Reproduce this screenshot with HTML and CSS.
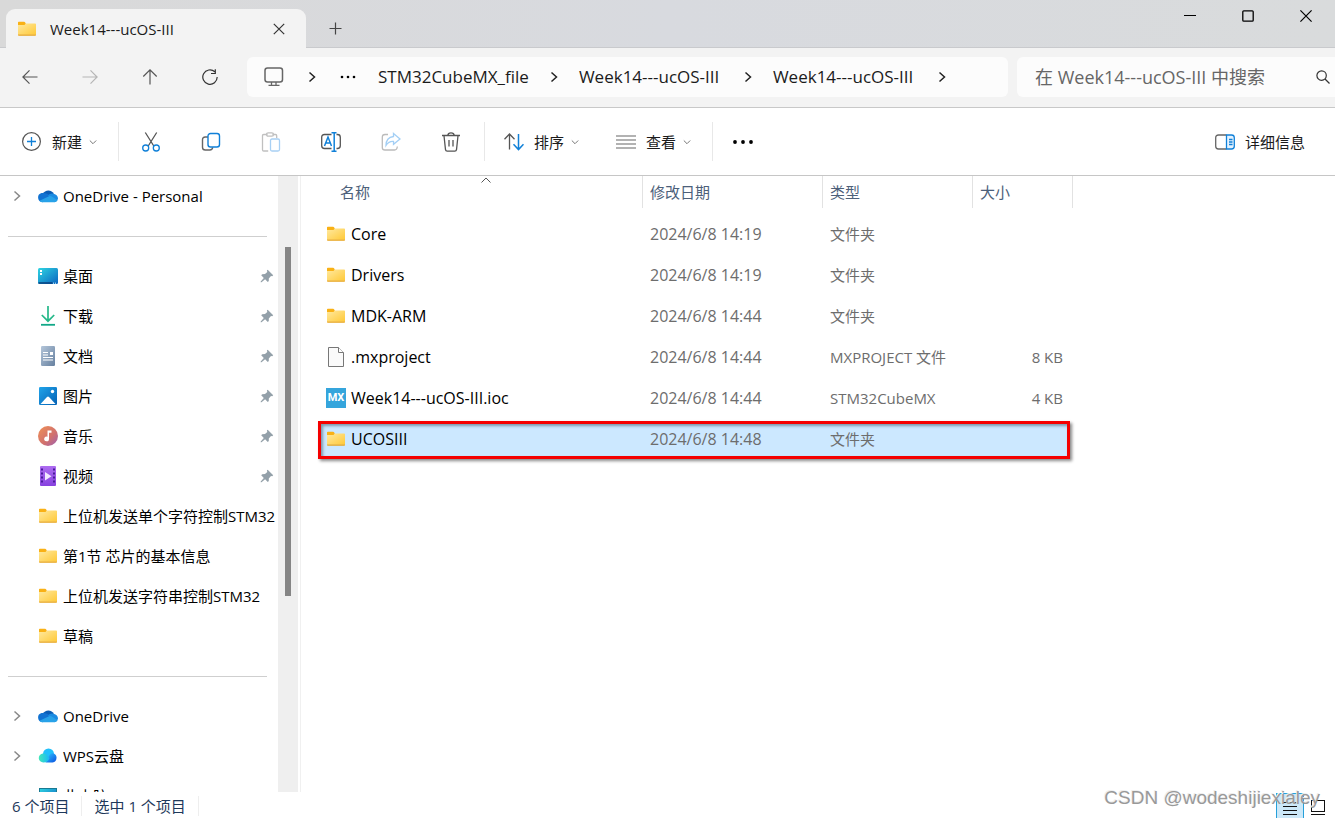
FILE: index.html
```html
<!DOCTYPE html>
<html lang="zh-CN">
<head>
<meta charset="utf-8">
<meta name="viewport" content="width=device-width, initial-scale=1">
<title>Week14---ucOS-III</title>
<link rel="stylesheet" href="styles.css">
</head>
<body>
<svg class="defs" aria-hidden="true">
  <defs>
    <linearGradient id="gFolder" x1="0" y1="0" x2="1" y2="1"><stop offset="0" stop-color="#ffe9a0"/><stop offset="1" stop-color="#ffc937"/></linearGradient>
    <linearGradient id="gDesk" x1="0" y1="0" x2="1" y2="1"><stop offset="0" stop-color="#2fd5e2"/><stop offset="1" stop-color="#0b64c0"/></linearGradient>
    <linearGradient id="gDoc" x1="0" y1="0" x2="1" y2="1"><stop offset="0" stop-color="#b4c6da"/><stop offset="1" stop-color="#66809f"/></linearGradient>
    <linearGradient id="gPic" x1="0" y1="0" x2="1" y2="1"><stop offset="0" stop-color="#20a4ea"/><stop offset="1" stop-color="#0561b4"/></linearGradient>
    <linearGradient id="gMusic" x1="0" y1="0" x2="1" y2="1"><stop offset="0" stop-color="#f09155"/><stop offset=".6" stop-color="#d0706f"/><stop offset="1" stop-color="#9c60b4"/></linearGradient>
    <linearGradient id="gVideo" x1="0" y1="0" x2="0" y2="1"><stop offset="0" stop-color="#ad6cf0"/><stop offset="1" stop-color="#8742df"/></linearGradient>
    <linearGradient id="gWps" x1="0" y1="0" x2="1" y2="1"><stop offset="0" stop-color="#30c8ff"/><stop offset="1" stop-color="#0a4fe0"/></linearGradient>
    <linearGradient id="gWps2" x1="0" y1="0" x2="1" y2="0"><stop offset="0" stop-color="#42e8b8"/><stop offset="1" stop-color="#18b8f8"/></linearGradient>
    <symbol id="folder" viewBox="0 0 20 20"><path d="M1 3.500q0-.8.8-.8h5.400q.5 0 .8.5l.8 1.200V7H1z" fill="#f9b115"/><path d="M1 6h6.500l1.300-1.600h9.400q.8 0 .8.8v10.600H1z" fill="url(#gFolder)"/><path d="M1 15.600h18v.3q0 .8-.8.8H1.800q-.8 0-.8-.8z" fill="#e8a41c"/></symbol>
    <symbol id="cloud" viewBox="0 0 20 20"><path d="M4 9.500A6.600 6.600 0 0 1 15 6.500L18 12H4z" fill="#0b5cb4"/><path d="M4.500 16.300A4.700 4.700 0 0 1 3.500 7.100q3.300-.6 6 1l6.500 4z" fill="#1172d2"/><path d="M10 9.300q2.500-2.500 5.500-1.600Q20 8.800 20 12.700q-.5 3-3.500 3.600z" fill="#1b8be2"/><path d="M1.500 14.800l9.500-4.500q1.400-.5 2.800.3l5.700 3.700q-1 1.900-3.300 2H4.700q-2 0-3.200-1.500z" fill="#28a2e8"/></symbol>
    <symbol id="wps" viewBox="0 0 20 20"><circle cx="10.500" cy="8" r="5.500" fill="#20c0fb"/><path d="M14.500 7.200a4.700 4.700 0 0 1 0 9.300H7.500L11.500 9q1.200-1.800 3-1.800z" fill="url(#gWps)"/><path d="M5 7.500q2.500-.2 4 1.500l2.500 3.200q-2 4.300-6 4.300A4.500 4.500 0 0 1 5 7.500z" fill="url(#gWps2)"/></symbol>
    <symbol id="pin" viewBox="0 0 14 14"><path d="M7.700.8 13.200 6.300 12.200 7.300 11 7.100 8.800 9.500V12L7.800 13 5.100 10.200 1.500 13.300.7 13.300.7 12.500 3.800 8.900 1.200 6.300 2.200 5.300 5 5 7.300 3 6.900 1.600z" fill="#93a0a9"/></symbol>
    <symbol id="chev" viewBox="0 0 10 12"><path d="M2.500 1.500 7.500 6l-5 4.500" fill="none" stroke="currentColor" stroke-width="1.500"/></symbol>
    <symbol id="down" viewBox="0 0 8 8"><path d="M.8 2.500 4 5.700 7.200 2.500" fill="none" stroke="#777" stroke-width="1"/></symbol>
  </defs>
</svg>

<header class="titlebar">
  <div class="tab">
    <svg class="ico"><use href="#folder"/></svg>
    <span class="tab-title">Week14---ucOS-III</span>
    <button class="plain tab-close" aria-label="关闭标签页"><svg width="12" height="12"><path d="M.8.800l10.400 10.400M11.200.8.8 11.200" stroke="#333" stroke-width="1.200"/></svg></button>
  </div>
  <button class="plain tab-add" aria-label="新标签页"><svg width="13" height="13"><path d="M6.500.5v12M.5 6.500h12" stroke="#444" stroke-width="1.200"/></svg></button>
  <div class="window-buttons">
    <button class="plain" aria-label="最小化"><svg width="12" height="12"><path d="M0 5.500h12" stroke="#000"/></svg></button>
    <button class="plain" aria-label="最大化"><svg width="12" height="12"><rect x=".8" y=".8" width="10.400" height="10.400" rx="1" fill="none" stroke="#000" stroke-width="1.300"/></svg></button>
    <button class="plain" aria-label="关闭"><svg width="12" height="12"><path d="M.4.400l11.200 11.200M11.600.4.4 11.600" stroke="#000" stroke-width="1.200"/></svg></button>
  </div>
</header>

<div class="navrow">
  <div class="nav-buttons">
    <button class="plain" aria-label="后退"><svg width="16" height="16"><path d="M15.500 8H1M7.500 1.300.9 8l6.600 6.700" fill="none" stroke="#555" stroke-width="1.200"/></svg></button>
    <button class="plain" aria-label="前进" disabled><svg width="16" height="16"><path d="M.5 8H15M8.500 1.300 15.100 8l-6.600 6.700" fill="none" stroke="#b5b5b5" stroke-width="1.200"/></svg></button>
    <button class="plain" aria-label="上移"><svg width="16" height="16"><path d="M8 15.500V1M1.300 7.500 8 .9l6.700 6.600" fill="none" stroke="#555" stroke-width="1.200"/></svg></button>
    <button class="plain" aria-label="刷新"><svg width="16" height="16"><path d="M15.200 8A7.200 7.200 0 1 1 12.800 2.700M13.300.3v4.200H9" fill="none" stroke="#333" stroke-width="1.200"/></svg></button>
  </div>
  <nav class="address" aria-label="地址栏">
    <svg class="monitor" viewBox="0 0 20 20"><rect x="1" y="1" width="17.500" height="14" rx="2.500" fill="none" stroke="#666" stroke-width="1.500"/><path d="M7.500 15v3M12 15v3M4.500 18.300h11" stroke="#666" stroke-width="1.300"/></svg>
    <svg class="sep first"><use href="#chev"/></svg>
    <button class="plain more" aria-label="更多路径"><svg width="16" height="4"><circle cx="2" cy="2" r="1.300"/><circle cx="8" cy="2" r="1.300"/><circle cx="14" cy="2" r="1.300"/></svg></button>
    <a href="#">STM32CubeMX_file</a><svg class="sep"><use href="#chev"/></svg>
    <a href="#">Week14---ucOS-III</a><svg class="sep"><use href="#chev"/></svg>
    <a href="#">Week14---ucOS-III</a><svg class="sep"><use href="#chev"/></svg>
  </nav>
  <label class="search">
    <input type="text" aria-label="搜索" placeholder="在 Week14---ucOS-III 中搜索">
    <svg width="14" height="14"><circle cx="5.600" cy="5.600" r="4.700" fill="none" stroke="#333" stroke-width="1.200"/><path d="m9 9 4.500 4.500" stroke="#333" stroke-width="1.200"/></svg>
  </label>
</div>

<div class="toolbar" role="toolbar" aria-label="命令">
  <button class="plain cmd new"><svg class="ico" fill="none"><circle cx="9.500" cy="9.500" r="8.900" stroke="#555" stroke-width="1.200"/><path d="M9.500 5v9M5 9.500h9" stroke="#1080d8" stroke-width="1.300"/></svg><span>新建</span><svg class="down"><use href="#down"/></svg></button>
  <i class="rule"></i>
  <div class="icons">
    <button class="plain" aria-label="剪切"><svg class="ico" fill="none" stroke-width="1.300"><path d="M4.300.500 12.800 14M15.700.500 7.200 14" stroke="#555"/><circle cx="4.700" cy="16" r="3" stroke="#1080d8"/><circle cx="15.300" cy="16" r="3" stroke="#1080d8"/></svg></button>
    <button class="plain" aria-label="复制"><svg class="ico" fill="none" stroke-width="1.400"><path d="M7 5H4.200Q1.500 5 1.500 7.800v7.400Q1.500 18 4.300 18h4.500q2.700 0 2.900-2.700" stroke="#666"/><rect x="7" y="1.500" width="11.500" height="13.500" rx="2.500" stroke="#1080d8"/></svg></button>
    <button class="plain" aria-label="粘贴" disabled><svg class="ico" fill="none" stroke-width="1.300"><path d="M6.500 2.500H2.700q-1.200 0-1.200 1.200v14q0 1.300 1.200 1.300h4.500M11.500 2.500h3q1.200 0 1.200 1.200V6" stroke="#c0c0c0"/><rect x="5.500" y=".8" width="7" height="3.400" rx="1.600" stroke="#c0c0c0"/><rect x="9.500" y="7" width="9" height="12" rx="1.500" stroke="#a8d0f4"/></svg></button>
    <button class="plain" aria-label="重命名"><svg class="ico" fill="none" stroke-width="1.300"><path d="M10.500 2.500H3.500Q.7 2.500.7 5.300v8.400q0 2.800 2.800 2.800h7M15.500 2.500h1q2.800 0 2.800 2.800v8.400q0 2.800-2.800 2.800h-1" stroke="#555"/><path d="M3.500 14 7 5l3.500 9M4.700 11h4.600M10.500.700h5M10.500 19.300h5M13.200.700v18.600" stroke="#1080d8" stroke-width="1.500"/></svg></button>
    <button class="plain" aria-label="共享" disabled><svg class="ico" fill="none" stroke-width="1.300"><path d="M7 2.500H4Q1.300 2.500 1.300 5.200v10.200Q1.300 18 4 18h9.500q2.600 0 2.800-3.500" stroke="#bbb" /><path d="M12.500 1.500 19 7l-6.500 5.300V9.500Q8 9 5 13.500 5 5.500 12.500 4.500z" stroke="#a3cff5"/></svg></button>
    <button class="plain" aria-label="删除"><svg class="ico" fill="none" stroke="#555" stroke-width="1.300"><path d="M1 3.500h18M6.800 3.300q.2-2.500 3.200-2.500t3.200 2.500M3 3.700l1.500 14q.2 1.500 1.700 1.500h7.600q1.500 0 1.700-1.500l1.500-14M8 8v6.500M12 8v6.500"/></svg></button>
  </div>
  <i class="rule"></i>
  <button class="plain cmd sort"><svg class="ico" fill="none" stroke-width="1.300"><path d="M5.500 17.500V2M.5 7.300 5.500 2l5 5.300" stroke="#555"/><path d="M14.500 2v15.500M9.500 12.300l5 5.300 5-5.300" stroke="#1080d8" stroke-width="1.500"/></svg><span>排序</span><svg class="down"><use href="#down"/></svg></button>
  <button class="plain cmd view"><svg class="ico" stroke="#666" stroke-width="1.200"><path d="M0 4h20M0 8h20M0 12h20M0 16h20"/></svg><span>查看</span><svg class="down"><use href="#down"/></svg></button>
  <i class="rule"></i>
  <button class="plain dots" aria-label="查看更多"><svg width="20" height="4"><circle cx="2" cy="2" r="1.900"/><circle cx="10" cy="2" r="1.900"/><circle cx="18" cy="2" r="1.900"/></svg></button>
  <button class="plain cmd details"><svg class="ico" fill="none" stroke-width="1.300"><path d="M11.500 3H3.500Q.7 3 .7 5.800v8.400Q.7 17 3.500 17h8" stroke="#666"/><path d="M11.500 3h5q2.800 0 2.800 2.800v8.400q0 2.800-2.800 2.800h-5zM14 7.500h3.500M14 10h3.500M14 12.500h3.500" stroke="#1080d8" fill="#e4f3ff"/></svg><span>详细信息</span></button>
</div>

<main class="main">
  <aside class="side">
    <ul class="tree">
      <li><svg class="exp"><use href="#chev"/></svg><svg class="ico"><use href="#cloud"/></svg><span>OneDrive - Personal</span></li>
      <li class="line"></li>
      <li><svg class="ico"><rect x="0" y="2" width="20" height="16" rx="1.500" fill="url(#gDesk)"/><path d="M2 4h2v2H2zM2 7h2v2H2z" fill="#fff"/><path d="M.5 17h14" stroke="#0a3a78" stroke-width="1.400"/><path d="M15 17.200h1M17 17.200h1" stroke="#dff" /></svg><span>桌面</span><svg class="pin"><use href="#pin"/></svg></li>
      <li><svg class="ico"><path d="M10 0v14.500M3.800 9 10 15.200 16.200 9" fill="none" stroke="#25b889" stroke-width="1.700"/><path d="M3 18.800h14" stroke="#12a888" stroke-width="1.800"/></svg><span>下载</span><svg class="pin"><use href="#pin"/></svg></li>
      <li><svg class="ico"><rect x="3" y="0" width="14" height="20" rx="1.200" fill="url(#gDoc)"/><path d="M5 6.500h5M5 9h5M5 11.500h10M5 14h10" stroke="#fff" stroke-width="1.100"/><path d="M12 6h3v3h-3z" fill="#fff"/></svg><span>文档</span><svg class="pin"><use href="#pin"/></svg></li>
      <li><svg class="ico"><rect x="1" y="1" width="18" height="18" rx="1.200" fill="url(#gPic)"/><path d="M2.500 18 9 11q1-.9 2 0l6.500 7z" fill="#fff"/><circle cx="14.500" cy="5.500" r="1.700" fill="#fff"/></svg><span>图片</span><svg class="pin"><use href="#pin"/></svg></li>
      <li><svg class="ico"><circle cx="10" cy="10" r="10" fill="url(#gMusic)"/><path d="M9.500 4.500h4v2.300h-2.500v6A2.400 2.400 0 1 1 9.500 10.700z" fill="#fff"/></svg><span>音乐</span><svg class="pin"><use href="#pin"/></svg></li>
      <li><svg class="ico"><rect x="2" y="0" width="16" height="20" rx="1" fill="url(#gVideo)"/><path d="M4 2.500v16M16 2.500v16" stroke="#4a1a9a" stroke-width="2" stroke-dasharray="2 2"/><path d="M7 6v8.500l6.500-4.200z" fill="#f2e8ff"/></svg><span>视频</span><svg class="pin"><use href="#pin"/></svg></li>
      <li><svg class="ico"><use href="#folder"/></svg><span>上位机发送单个字符控制STM32</span></li>
      <li><svg class="ico"><use href="#folder"/></svg><span>第1节 芯片的基本信息</span></li>
      <li><svg class="ico"><use href="#folder"/></svg><span>上位机发送字符串控制STM32</span></li>
      <li><svg class="ico"><use href="#folder"/></svg><span>草稿</span></li>
      <li class="line"></li>
      <li><svg class="exp"><use href="#chev"/></svg><svg class="ico"><use href="#cloud"/></svg><span>OneDrive</span></li>
      <li><svg class="exp"><use href="#chev"/></svg><svg class="ico"><use href="#wps"/></svg><span>WPS云盘</span></li>
      <li><svg class="ico"><rect x="1.500" y="2.500" width="17" height="13" fill="url(#gDesk)" stroke="#197a92"/></svg><span>此电脑</span></li>
    </ul>
    <div class="scrollbar"><div class="thumb"></div></div>
  </aside>

  <section class="files">
    <table>
      <colgroup><col class="c-name"><col class="c-date"><col class="c-type"><col class="c-size"></colgroup>
      <thead>
        <tr>
          <th><button class="plain">名称</button><svg class="sorted" viewBox="0 0 10 6"><path d="M.5 5.500 5 1l4.500 4.500" fill="none" stroke="#555"/></svg></th>
          <th><button class="plain">修改日期</button></th><th><button class="plain">类型</button></th><th><button class="plain">大小</button></th>
        </tr>
      </thead>
      <tbody>
        <tr><td><div class="name"><svg class="ico"><use href="#folder"/></svg>Core</div></td><td class="date">2024/6/8 14:19</td><td>文件夹</td><td></td></tr>
        <tr><td><div class="name"><svg class="ico"><use href="#folder"/></svg>Drivers</div></td><td class="date">2024/6/8 14:19</td><td>文件夹</td><td></td></tr>
        <tr><td><div class="name"><svg class="ico"><use href="#folder"/></svg>MDK-ARM</div></td><td class="date">2024/6/8 14:44</td><td>文件夹</td><td></td></tr>
        <tr><td><div class="name"><svg class="ico"><path d="M2.500.5h10l5 5v14h-15z" fill="#fafafa" stroke="#777"/><path d="M12.500.5v5h5" fill="#fff" stroke="#777"/></svg>.mxproject</div></td><td class="date">2024/6/8 14:44</td><td>MXPROJECT 文件</td><td>8 KB</td></tr>
        <tr><td><div class="name"><span class="ico mx">MX</span>Week14---ucOS-III.ioc</div></td><td class="date">2024/6/8 14:44</td><td>STM32CubeMX</td><td>4 KB</td></tr>
        <tr class="selected"><td><div class="name"><svg class="ico"><use href="#folder"/></svg>UCOSIII</div></td><td class="date">2024/6/8 14:48</td><td>文件夹</td><td></td></tr>
      </tbody>
    </table>
  </section>
</main>

<footer class="status">
  <span>6 个项目</span><span>选中 1 个项目</span>
  <div class="modes">
    <button class="plain on" aria-label="详细信息视图"><svg width="14" height="16" stroke="#111"><path d="M0 2.500h14M0 6.500h14M0 10.500h14M0 14.500h14"/></svg></button>
    <button class="plain" aria-label="大图标视图"><svg width="14" height="16" fill="none" stroke="#111"><rect x=".5" y=".5" width="13" height="11"/><path d="M0 14.500h14"/></svg></button>
  </div>
  <div class="watermark">CSDN @wodeshijiexialey</div>
</footer>
</body>
</html>
```
FILE: styles.css
```css
* { box-sizing: border-box; }
body {
  margin: 0;
  height: 100vh;
  display: flex;
  flex-direction: column;
  overflow: hidden;
  background: #fff;
  color: #000;
  font: 15px/20px "Open Sans", "Noto Sans CJK SC", sans-serif;
}
.defs { position: absolute; width: 0; height: 0; }
svg { display: block; flex: none; }
.ico { width: 20px; height: 20px; flex: none; }
.plain {
  border: 0;
  padding: 0;
  background: none;
  font: inherit;
  color: inherit;
  display: flex;
  align-items: center;
  justify-content: center;
}

.titlebar {
  height: 48px;
  flex: none;
  display: flex;
  padding-left: 6px;
  background: linear-gradient(90deg, #d9d9d9, #d8dadf 50%, #d9dbdc);
  border-bottom: 1px solid #c9cacd;
}
.tab {
  width: 300px;
  height: 39px;
  margin-top: 9px;
  padding: 0 21px 0 11px;
  display: flex;
  align-items: center;
  background: #f3f3f3;
  border-radius: 9px 9px 0 0;
}
.tab-title { flex: 1; margin-left: 13px; color: #1b1b1b; }
.tab-add { width: 58px; margin-top: 10px; }
.window-buttons { margin-left: auto; height: 32px; display: flex; }
.window-buttons button { width: 58px; }

.navrow {
  height: 60px;
  flex: none;
  display: flex;
  align-items: center;
  padding-bottom: 1px;
  background: #f3f3f3;
  border-bottom: 1px solid #c8c8c8;
  font-size: 17px;
}
.nav-buttons { display: flex; width: 247px; flex: none; }
.nav-buttons button { width: 60px; height: 40px; }
.address {
  flex: 1;
  min-width: 0;
  height: 40px;
  margin-right: 9px;
  padding-left: 17px;
  display: flex;
  align-items: center;
  background: #fcfcfc;
  border-radius: 6px;
  overflow: hidden;
  white-space: nowrap;
}
.address a { min-width: 144px; color: #1b1b1b; text-decoration: none; }
.monitor { width: 20px; height: 20px; }
.sep { width: 10px; height: 12px; margin: 0 20px; color: #222; }
.sep.first { margin: 0 23px; }
.more { width: 16px; margin-right: 22px; }
.search {
  width: 318px;
  height: 40px;
  padding: 0 5px 0 18px;
  display: flex;
  align-items: center;
  background: #fcfcfc;
  border-radius: 6px 0 0 6px;
  font-size: 18px;
}
.search input { flex: 1; min-width: 0; border: 0; padding: 0; outline: 0; background: none; font: inherit; }
.search input::placeholder { color: #666; opacity: 1; }

.toolbar {
  height: 68px;
  flex: none;
  display: flex;
  align-items: center;
  border-bottom: 1px solid #c6c6c6;
  color: #1b1b1b;
}
.rule { width: 1px; height: 39px; background: #e8e8e8; }
.icons { display: flex; margin: 0 3px 0 2px; }
.icons button { width: 60px; height: 40px; }
.cmd { height: 40px; gap: 10px; white-space: nowrap; }
.down { width: 8px; height: 8px; margin-left: -3px; }
.new { padding: 0 21px 0 22px; }
.sort { padding: 0 37px 0 19px; }
.view { padding: 0 21px 0 0; }
.dots { width: 60px; height: 40px; }
.details { margin-left: auto; padding-right: 30px; }

.main { flex: 1; min-height: 0; display: flex; }
.side { width: 301px; flex: none; display: flex; overflow: hidden; border-right: 1px solid #f0f0f0; }
.tree { width: 278px; margin: 0; padding: 0; list-style: none; overflow: hidden; white-space: nowrap; }
.tree li {
  height: 40px;
  padding-left: 38px;
  display: flex;
  align-items: center;
  position: relative;
}
.tree li span { margin-left: 5px; }
.exp { position: absolute; left: 12px; width: 10px; height: 12px; color: #888; }
.pin { width: 14px; height: 14px; margin-left: auto; margin-right: 4px; }
.tree .line { padding: 0 11px 0 8px; }
.line::after { content: ""; flex: 1; height: 1px; background: #cfcfcf; }
.scrollbar { width: 20px; background: #efefef; display: flex; justify-content: center; padding-top: 71px; }
.thumb { width: 6px; height: 349px; background: #858585; }

.files { flex: 1; min-width: 0; padding-left: 17px; }
table { border-collapse: collapse; table-layout: fixed; width: 755px; }
.c-name { width: 325px; }
.c-date { width: 180px; }
.c-type { width: 150px; }
.c-size { width: 100px; }
th { height: 37px; padding: 0; vertical-align: top; font-weight: 400; position: relative; }
th .plain { width: 100%; height: 32px; padding-left: 7px; justify-content: flex-start; color: #4c607a; border-right: 1px solid #e2e2e2; }
th:first-child .plain { padding-left: 22px; }
.sorted { position: absolute; top: 1px; left: 50%; width: 10px; height: 6px; }
td { height: 41px; padding: 0 0 0 7px; color: #6d6d6d; white-space: nowrap; }
td:last-child { text-align: right; padding-right: 10px; }
.name { display: flex; align-items: center; gap: 5px; color: #000; }
.name, .date { font-size: 16px; }
td:first-child { padding-left: 8px; }
.mx { background: #35a5dc; color: #fff; font: 700 11px/20px Roboto, sans-serif; text-align: center; }
.selected { position: relative; z-index: 0; }
.selected::after {
  content: "";
  position: absolute;
  z-index: -1;
  inset: 3px 3px 0 0;
  border: 3px solid #f50000;
  background: #cce8ff;
  box-shadow: 2px 2px 3px #888, inset 2px 2px 3px #7d98ad;
}

.status { height: 26px; flex: none; display: flex; align-items: center; padding-left: 12px; padding-top: 2px; position: relative; color: #1e395b; }
.status span { padding-right: 12px; margin-right: 12px; border-right: 1px solid #eee; }
.modes { margin-left: auto; display: flex; padding-right: 3px; }
.modes button { width: 28px; height: 26px; padding-top: 3px; }
.modes .on { background: #cce8f8; border: 1px solid #26a0da; }
.watermark {
  position: absolute;
  right: 15px;
  top: -6px;
  font: 19px/24px "Liberation Sans", sans-serif;
  color: #999;
  text-shadow: -1px -1px 0 #eee;
}
```
